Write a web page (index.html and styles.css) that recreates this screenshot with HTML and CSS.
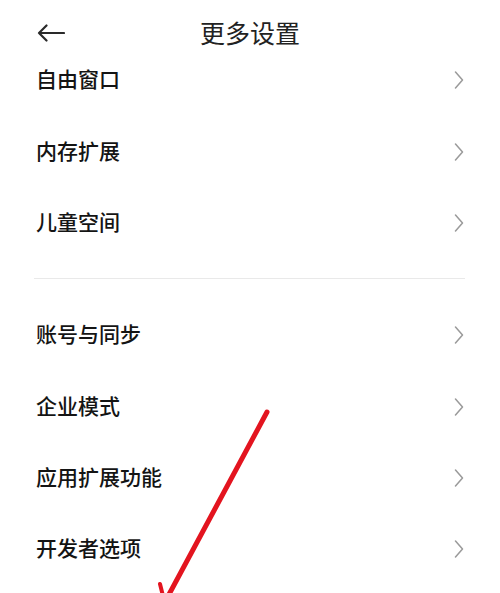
FILE: index.html
```html
<!DOCTYPE html>
<html lang="zh-CN">
<head>
<meta charset="utf-8">
<title>更多设置</title>
<link rel="stylesheet" href="styles.css">
</head>
<body>
<div class="screen">
  <header class="topbar">
    <svg class="back" width="28" height="18" viewBox="0 0 28 18">
      <path d="M27 9H2M9.5 1.5L2 9l7.5 7.5" fill="none" stroke="#2a2a2a" stroke-width="2.2" stroke-linecap="round" stroke-linejoin="round"/>
    </svg>
    <h1 class="title">更多设置</h1>
  </header>

  <ul class="group group-a">
    <li class="row"><span class="label">自由窗口</span><svg class="chev" width="10" height="18" viewBox="0 0 10 18"><path d="M1.5 1L8.5 9l-7 8" fill="none" stroke="#9a9a9a" stroke-width="1.5" stroke-linecap="round" stroke-linejoin="round"/></svg></li>
    <li class="row"><span class="label">内存扩展</span><svg class="chev" width="10" height="18" viewBox="0 0 10 18"><path d="M1.5 1L8.5 9l-7 8" fill="none" stroke="#9a9a9a" stroke-width="1.5" stroke-linecap="round" stroke-linejoin="round"/></svg></li>
    <li class="row"><span class="label">儿童空间</span><svg class="chev" width="10" height="18" viewBox="0 0 10 18"><path d="M1.5 1L8.5 9l-7 8" fill="none" stroke="#9a9a9a" stroke-width="1.5" stroke-linecap="round" stroke-linejoin="round"/></svg></li>
  </ul>

  <div class="divider"></div>

  <ul class="group group-b">
    <li class="row"><span class="label">账号与同步</span><svg class="chev" width="10" height="18" viewBox="0 0 10 18"><path d="M1.5 1L8.5 9l-7 8" fill="none" stroke="#9a9a9a" stroke-width="1.5" stroke-linecap="round" stroke-linejoin="round"/></svg></li>
    <li class="row"><span class="label">企业模式</span><svg class="chev" width="10" height="18" viewBox="0 0 10 18"><path d="M1.5 1L8.5 9l-7 8" fill="none" stroke="#9a9a9a" stroke-width="1.5" stroke-linecap="round" stroke-linejoin="round"/></svg></li>
    <li class="row"><span class="label">应用扩展功能</span><svg class="chev" width="10" height="18" viewBox="0 0 10 18"><path d="M1.5 1L8.5 9l-7 8" fill="none" stroke="#9a9a9a" stroke-width="1.5" stroke-linecap="round" stroke-linejoin="round"/></svg></li>
    <li class="row"><span class="label">开发者选项</span><svg class="chev" width="10" height="18" viewBox="0 0 10 18"><path d="M1.5 1L8.5 9l-7 8" fill="none" stroke="#9a9a9a" stroke-width="1.5" stroke-linecap="round" stroke-linejoin="round"/></svg></li>
  </ul>

  <svg class="annotation" width="500" height="593" viewBox="0 0 500 593">
    <path d="M267 412L166 600" fill="none" stroke="#e3141f" stroke-width="5" stroke-linecap="round"/>
    <path d="M160 584L164 600" fill="none" stroke="#e3141f" stroke-width="4" stroke-linecap="round"/>
  </svg>
</div>
</body>
</html>
```

FILE: styles.css
```css
* {
  box-sizing: border-box;
}

html, body {
  margin: 0;
  padding: 0;
  background: #ffffff;
}

body {
  font-family: "Noto Sans CJK SC", "Noto Sans", sans-serif;
  color: #141414;
}

.screen {
  position: relative;
  width: 500px;
  height: 593px;
  overflow: hidden;
  background: #ffffff;
}

.topbar {
  height: 44px;
  padding: 21px 36px 0 37px;
  display: flex;
  align-items: flex-start;
  position: relative;
}

.back {
  display: block;
  margin-top: 3px;
}

.title {
  position: absolute;
  left: 0;
  right: 0;
  top: 18px;
  margin: 0;
  text-align: center;
  font-size: 25px;
  line-height: 28px;
  font-weight: 400;
  color: #222222;
}

.group {
  list-style: none;
  margin: 0;
  padding: 0 36px 0 36px;
}

.row {
  display: flex;
  align-items: center;
  justify-content: space-between;
}

.group-a .row {
  height: 71.75px;
}

.group-b .row {
  height: 71.2px;
}

.label {
  font-size: 21px;
  line-height: 24px;
  padding-bottom: 4px;
  font-weight: 500;
  color: #141414;
}

.chev {
  display: block;
}

.divider {
  height: 1px;
  background: #e9e9e9;
  margin: 18.5px 35px 21px 34px;
}

.annotation {
  position: absolute;
  left: 0;
  top: 0;
  pointer-events: none;
}
```
